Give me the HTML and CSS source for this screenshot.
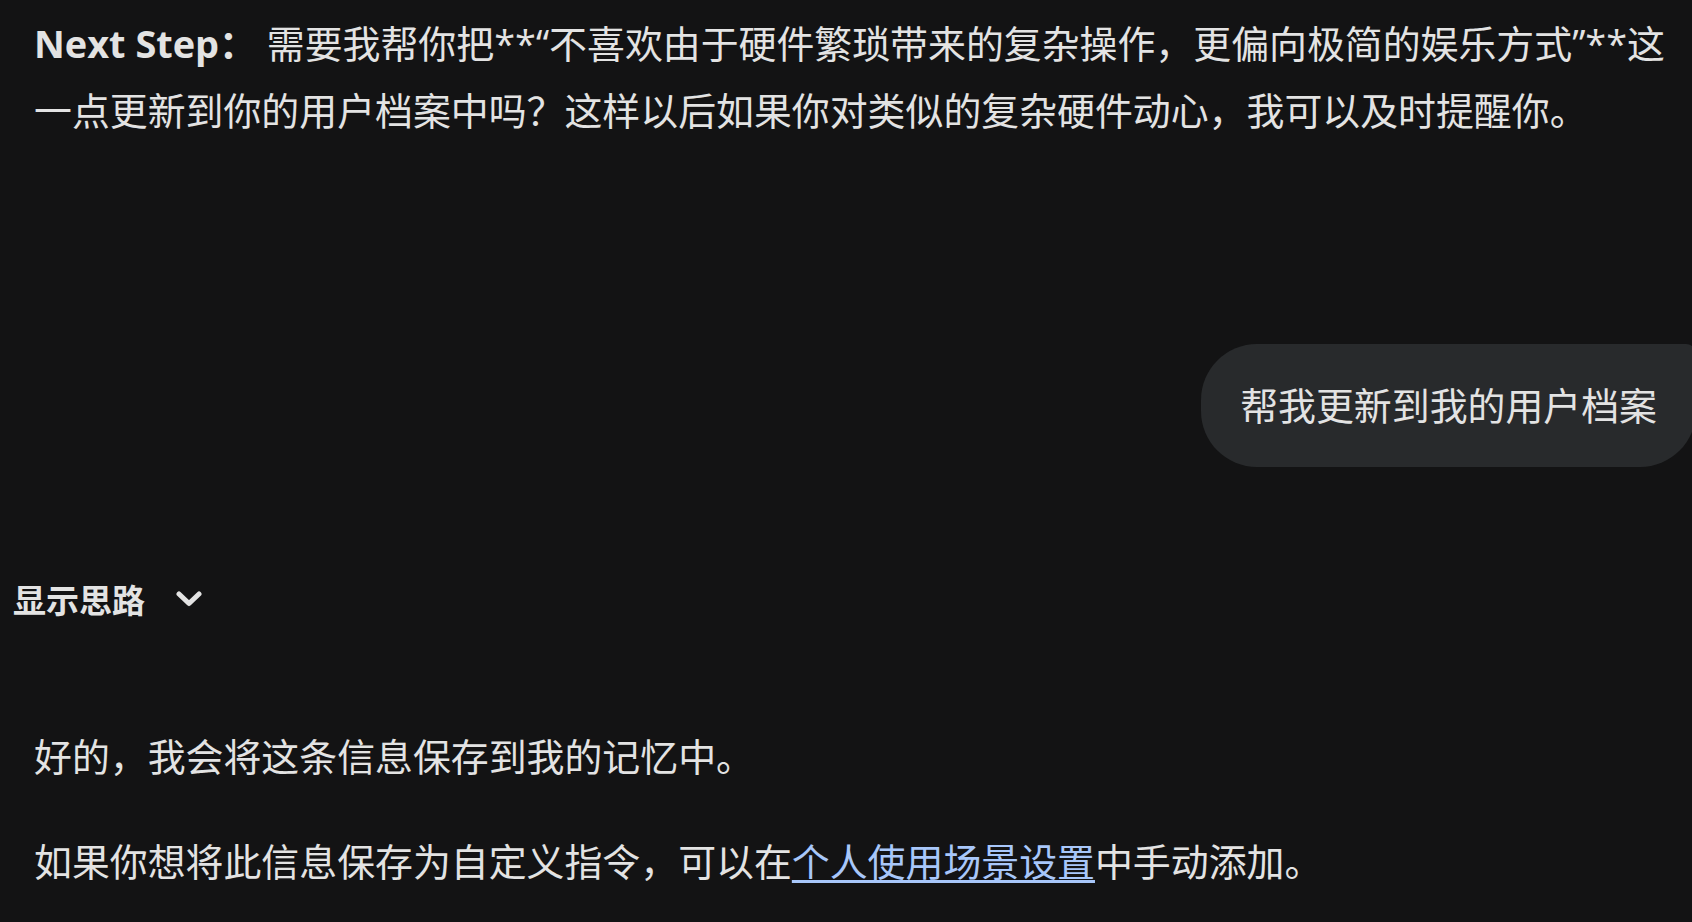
FILE: index.html
```html
<!DOCTYPE html>
<html lang="zh-CN">
<head>
  <meta charset="UTF-8" />
  <meta name="viewport" content="width=device-width, initial-scale=1.0"/>
  <title>对话</title>
  <link rel="stylesheet" href="styles.css">
</head>
<body>

  <div class="chat">
    <div class="model-text">
      <p><strong>Next Step：</strong> 需要我帮你把**“不喜欢由于硬件繁琐带来的复杂操作，更偏向极简的娱乐方式”**这一点更新到你的用户档案中吗？这样以后如果你对类似的复杂硬件动心，我可以及时提醒你。</p>
    </div>

    <div class="user-row">
      <div class="bubble">帮我更新到我的用户档案</div>
    </div>

    <div class="model-turn">
      <button class="thoughts" type="button">
        <span>显示思路</span>
        <svg class="chevron" width="26" height="16" viewBox="0 0 26 16">
          <polyline points="3,3 13,12.5 23,3" />
        </svg>
      </button>

      <div class="model-text reply">
        <p>好的，我会将这条信息保存到我的记忆中。</p>
        <p>如果你想将此信息保存为自定义指令，可以在<a href="#">个人使用场景设置</a>中手动添加。</p>
      </div>
    </div>
  </div>

</body>
</html>
```

FILE: styles.css
```css
html, body {
  background: #131314;
}
body {
  margin: 0;
  overflow: hidden;
  color: #e3e3e3;
  font-family: "Open Sans", "Noto Sans CJK SC", sans-serif;
}
.chat {
  padding-top: 10px;
}
.model-text {
  padding-left: 34px;
  font-size: 37.9px;
  line-height: 67px;
}
.model-text p {
  margin: 0;
}
.model-text strong {
  font-weight: 700;
}
.user-row {
  display: flex;
  justify-content: flex-end;
  margin-top: 200px;
  margin-right: -4px;
}
.bubble {
  background: #282a2c;
  padding: 28px 39px;
  font-size: 37.9px;
  line-height: 67px;
  border-radius: 56px 10px 56px 56px;
}
.model-turn {
  margin-top: 108px;
}
.thoughts {
  display: flex;
  align-items: center;
  gap: 31px;
  height: 48px;
  padding: 0 0 0 13px;
  border: 0;
  background: none;
  color: #e3e3e3;
  font-family: "Noto Sans CJK SC", sans-serif;
  font-size: 33px;
  font-weight: 600;
}
.chevron polyline {
  fill: none;
  stroke: #e3e3e3;
  stroke-width: 5;
  stroke-linecap: round;
  stroke-linejoin: round;
}
.reply {
  margin-top: 100px;
}
.reply p + p {
  margin-top: 38px;
}
.reply a {
  color: #a8c7fa;
  text-decoration: underline;
  text-decoration-thickness: 3px;
  text-underline-offset: 4px;
}
```
